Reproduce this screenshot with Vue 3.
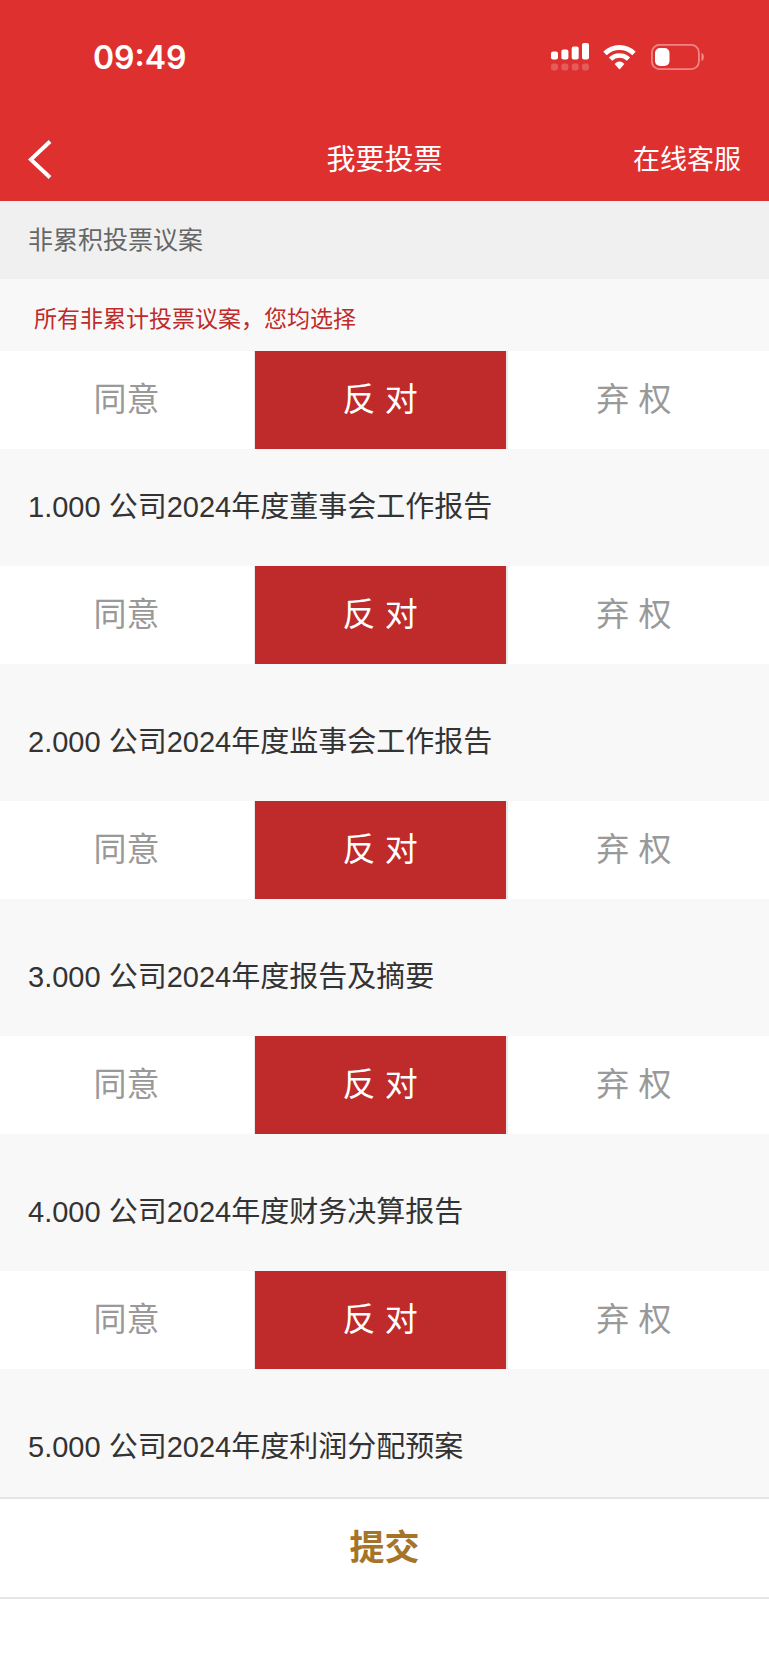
<template>
  <div class="vote-page">
    <header class="page-header">
      <div class="status-bar">
        <span class="status-time">09:49</span>
        <div class="status-icons">
          <svg class="icon-signal" viewBox="0 0 38 28" fill="#fff">
            <rect x="0" y="8.5" width="7" height="8" rx="2" />
            <rect x="10.4" y="6.5" width="7" height="10" rx="2" />
            <rect x="20.7" y="3.5" width="7" height="13" rx="2" />
            <rect x="31" y="0" width="7" height="16.5" rx="2" />
            <g opacity="0.2">
              <rect x="0" y="20.5" width="7" height="7" rx="2.4" />
              <rect x="10.4" y="20.5" width="7" height="7" rx="2.4" />
              <rect x="20.7" y="20.5" width="7" height="7" rx="2.4" />
              <rect x="31" y="20.5" width="7" height="7" rx="2.4" />
            </g>
          </svg>
          <svg class="icon-wifi" viewBox="0 0 34 25" fill="none" stroke="#fff">
            <path d="M2 8.5A20.5 20.5 0 0 1 31 8.5" stroke-width="4.8" />
            <path d="M7.5 14.2A12.7 12.7 0 0 1 25.5 14.2" stroke-width="4.6" />
            <path d="M16.5 24.4L11.6 19Q16.5 14.2 21.4 19Z" fill="#fff" stroke="none" />
          </svg>
          <svg class="icon-battery" viewBox="0 0 54 26">
            <rect x="0.9" y="0.9" width="47" height="24.2" rx="7.6" fill="none" stroke="#fff" stroke-opacity="0.42" stroke-width="1.8" />
            <rect x="4" y="4" width="14.5" height="18" rx="5" fill="#fff" />
            <path d="M50.5 9C53.7 10 53.7 16 50.5 17Z" fill="#fff" fill-opacity="0.45" />
          </svg>
        </div>
      </div>
      <nav class="nav-bar">
        <button type="button" class="back-btn" aria-label="返回">
          <svg class="icon-back" viewBox="0 0 24 39" fill="none" stroke="#fff" stroke-width="4">
            <path d="M22 1.5L2.8 19.5L22 37.5" />
          </svg>
        </button>
        <h1 class="nav-title">我要投票</h1>
        <a href="#" class="service-link">在线客服</a>
      </nav>
    </header>

    <h2 class="section-title">非累积投票议案</h2>

    <main class="proposal-list">
      <section v-for="(item, index) in proposals" :key="index" class="proposal">
        <p v-if="index === 0" :id="'proposal-' + index" class="all-hint">{{ item.title }}</p>
        <h3 v-else :id="'proposal-' + index" class="proposal-title">{{ item.title }}</h3>
        <div v-if="!item.collapsed" class="options" role="radiogroup" :aria-labelledby="'proposal-' + index">
          <label
            v-for="option in options"
            :key="option.value"
            class="option"
            :class="{ active: item.choice === option.value }"
          >
            <input
              type="radio"
              class="option-input"
              :name="'vote-' + index"
              :value="option.value"
              :checked="item.choice === option.value"
              @change="handleChoose(index, option.value)"
            >
            <span>{{ option.label }}</span>
          </label>
        </div>
      </section>
    </main>

    <footer class="page-footer">
      <button type="button" class="submit-btn">提交</button>
    </footer>
  </div>
</template>

<script setup>
import { ref } from 'vue'

const options = [
  { value: 'agree', label: '同意' },
  { value: 'against', label: '反 对' },
  { value: 'abstain', label: '弃 权' }
]

// 第一项为统一选择
const proposals = ref([
  { title: '所有非累计投票议案，您均选择', choice: 'against' },
  { title: '1.000 公司2024年度董事会工作报告', choice: 'against' },
  { title: '2.000 公司2024年度监事会工作报告', choice: 'against' },
  { title: '3.000 公司2024年度报告及摘要', choice: 'against' },
  { title: '4.000 公司2024年度财务决算报告', choice: 'against' },
  { title: '5.000 公司2024年度利润分配预案', choice: 'against', collapsed: true }
])

const handleChoose = (index, value) => {
  if (index === 0) {
    proposals.value.forEach((item) => {
      item.choice = value
    })
    return
  }
  proposals.value[index].choice = value
}
</script>

<style>
body {
  margin: 0;
}
</style>

<style scoped>
.vote-page {
  height: 100vh;
  display: flex;
  flex-direction: column;
  background: #f8f8f8;
  color: #333;
  font-family: "Liberation Sans", "Noto Sans CJK SC", sans-serif;
}

.page-header {
  flex-shrink: 0;
  background: #df3030;
  color: #fff;
}

/* 状态栏 */
.status-bar {
  height: 114px;
  padding: 0 64px 0 93px;
  display: flex;
  align-items: center;
  justify-content: space-between;
}

.status-time {
  font-family: Inter, sans-serif;
  font-size: 32px;
  font-weight: 600;
}

.status-icons {
  display: flex;
  align-items: center;
  gap: 14px;
}

.status-icons svg {
  display: block;
}

.icon-signal {
  width: 38px;
  height: 28px;
}

.icon-wifi {
  width: 34px;
  height: 25px;
}

.icon-battery {
  width: 54px;
  height: 26px;
}

/* 导航栏 */
.nav-bar {
  padding: 4px 28px 0;
  height: 83px;
  display: grid;
  grid-template-columns: 1fr auto 1fr;
  align-items: center;
  line-height: 36px;
}

.back-btn {
  justify-self: start;
  padding: 0;
  border: none;
  background: none;
  cursor: pointer;
}

.icon-back {
  display: block;
  width: 24px;
  height: 39px;
}

.nav-title {
  margin: 0;
  font-size: 29px;
  font-weight: 400;
}

.service-link {
  justify-self: end;
  color: #fff;
  font-size: 27px;
  text-decoration: none;
}

.section-title {
  flex-shrink: 0;
  margin: 0;
  padding: 0 28px;
  background: #f0f0f0;
  color: #666;
  font-size: 25px;
  font-weight: 400;
  line-height: 78px;
}

/* 议案列表 */
.proposal-list {
  flex: 1;
  min-height: 0;
  overflow-y: auto;
  scrollbar-width: none;
}

.all-hint {
  margin: 0;
  padding: 22px 34px 14px;
  color: #bf2a2a;
  font-size: 23px;
  line-height: 36px;
}

.proposal-title {
  margin: 0;
  padding: 60px 28px 41px;
  font-size: 29px;
  font-weight: 400;
  line-height: 36px;
}

.proposal:nth-child(2) .proposal-title {
  padding-top: 40px;
}

.options {
  display: flex;
  background: #fff;
}

.option {
  position: relative;
  width: 33%;
  box-sizing: border-box;
  border: solid transparent;
  border-width: 0 2px 0 1px;
  color: #999;
  font-size: 33px;
  line-height: 98px;
  text-align: center;
  cursor: pointer;
}

.option.active {
  border-color: #e8e8e8;
  background: #bf2a2a;
  color: #fff;
}

.option-input {
  position: absolute;
  inset: 0;
  width: 100%;
  height: 100%;
  margin: 0;
  opacity: 0;
  cursor: pointer;
}

/* 底部提交 */
.page-footer {
  flex-shrink: 0;
  padding-bottom: 66px;
  background: #fff;
}

.submit-btn {
  display: block;
  width: 100%;
  padding: 0;
  border: solid #e5e5e5;
  border-width: 2px 0;
  background: #fff;
  color: #a67428;
  font-family: inherit;
  font-size: 35px;
  font-weight: 700;
  line-height: 98px;
  cursor: pointer;
}
</style>
